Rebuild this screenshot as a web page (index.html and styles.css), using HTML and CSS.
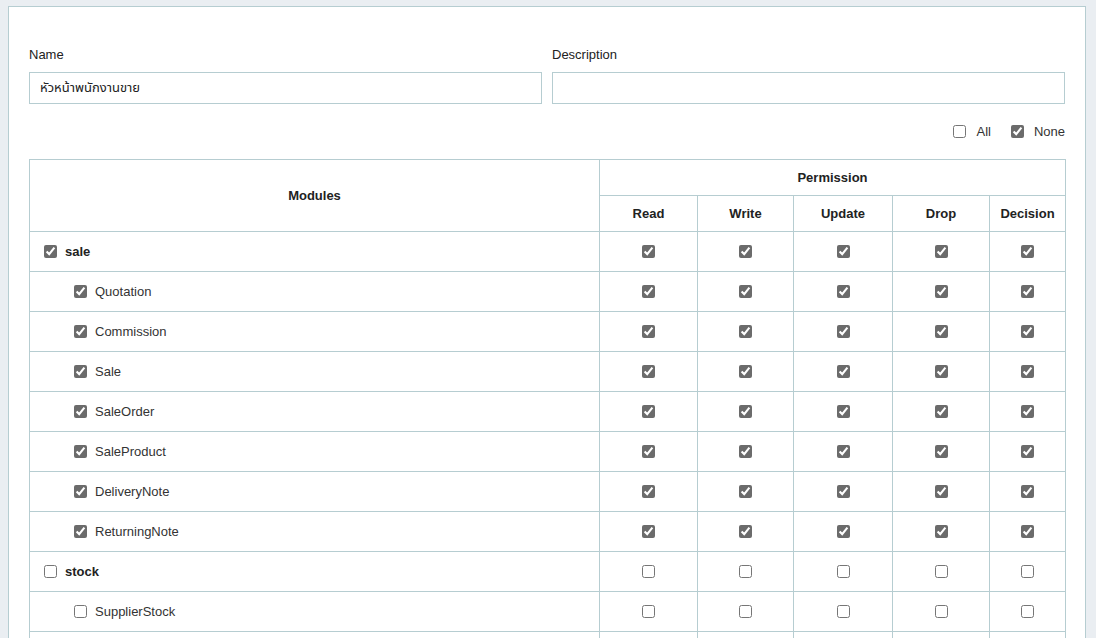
FILE: index.html
```html
<!DOCTYPE html>
<html>
<head>
<meta charset="utf-8">
<link rel="stylesheet" href="styles.css">
</head>
<body>
<div class="card">
  <div class="fields">
    <div class="field">
      <label class="label">Name</label>
      <input class="input" type="text" value="หัวหน้าพนักงานขาย">
    </div>
    <div class="field">
      <label class="label">Description</label>
      <input class="input" type="text" value="">
    </div>
  </div>
  <div class="toggles">
    <label class="toggle"><input type="checkbox" class="cb"> All</label>
    <label class="toggle"><input type="checkbox" class="cb" checked> None</label>
  </div>
  <table class="perm">
    <colgroup>
      <col class="c-mod"><col class="c-read"><col class="c-write"><col class="c-update"><col class="c-drop"><col class="c-dec">
    </colgroup>
    <thead>
      <tr class="h1">
        <th rowspan="2">Modules</th>
        <th colspan="5">Permission</th>
      </tr>
      <tr class="h2">
        <th>Read</th><th>Write</th><th>Update</th><th>Drop</th><th>Decision</th>
      </tr>
    </thead>
    <tbody>
      <tr class="parent"><td><label class="mod"><input type="checkbox" class="cb" checked>sale</label></td>
        <td><input type="checkbox" class="cb" checked></td><td><input type="checkbox" class="cb" checked></td><td><input type="checkbox" class="cb" checked></td><td><input type="checkbox" class="cb" checked></td><td><input type="checkbox" class="cb" checked></td></tr>
      <tr class="child"><td><label class="mod"><input type="checkbox" class="cb" checked>Quotation</label></td>
        <td><input type="checkbox" class="cb" checked></td><td><input type="checkbox" class="cb" checked></td><td><input type="checkbox" class="cb" checked></td><td><input type="checkbox" class="cb" checked></td><td><input type="checkbox" class="cb" checked></td></tr>
      <tr class="child"><td><label class="mod"><input type="checkbox" class="cb" checked>Commission</label></td>
        <td><input type="checkbox" class="cb" checked></td><td><input type="checkbox" class="cb" checked></td><td><input type="checkbox" class="cb" checked></td><td><input type="checkbox" class="cb" checked></td><td><input type="checkbox" class="cb" checked></td></tr>
      <tr class="child"><td><label class="mod"><input type="checkbox" class="cb" checked>Sale</label></td>
        <td><input type="checkbox" class="cb" checked></td><td><input type="checkbox" class="cb" checked></td><td><input type="checkbox" class="cb" checked></td><td><input type="checkbox" class="cb" checked></td><td><input type="checkbox" class="cb" checked></td></tr>
      <tr class="child"><td><label class="mod"><input type="checkbox" class="cb" checked>SaleOrder</label></td>
        <td><input type="checkbox" class="cb" checked></td><td><input type="checkbox" class="cb" checked></td><td><input type="checkbox" class="cb" checked></td><td><input type="checkbox" class="cb" checked></td><td><input type="checkbox" class="cb" checked></td></tr>
      <tr class="child"><td><label class="mod"><input type="checkbox" class="cb" checked>SaleProduct</label></td>
        <td><input type="checkbox" class="cb" checked></td><td><input type="checkbox" class="cb" checked></td><td><input type="checkbox" class="cb" checked></td><td><input type="checkbox" class="cb" checked></td><td><input type="checkbox" class="cb" checked></td></tr>
      <tr class="child"><td><label class="mod"><input type="checkbox" class="cb" checked>DeliveryNote</label></td>
        <td><input type="checkbox" class="cb" checked></td><td><input type="checkbox" class="cb" checked></td><td><input type="checkbox" class="cb" checked></td><td><input type="checkbox" class="cb" checked></td><td><input type="checkbox" class="cb" checked></td></tr>
      <tr class="child"><td><label class="mod"><input type="checkbox" class="cb" checked>ReturningNote</label></td>
        <td><input type="checkbox" class="cb" checked></td><td><input type="checkbox" class="cb" checked></td><td><input type="checkbox" class="cb" checked></td><td><input type="checkbox" class="cb" checked></td><td><input type="checkbox" class="cb" checked></td></tr>
      <tr class="parent"><td><label class="mod"><input type="checkbox" class="cb">stock</label></td>
        <td><input type="checkbox" class="cb"></td><td><input type="checkbox" class="cb"></td><td><input type="checkbox" class="cb"></td><td><input type="checkbox" class="cb"></td><td><input type="checkbox" class="cb"></td></tr>
      <tr class="child"><td><label class="mod"><input type="checkbox" class="cb">SupplierStock</label></td>
        <td><input type="checkbox" class="cb"></td><td><input type="checkbox" class="cb"></td><td><input type="checkbox" class="cb"></td><td><input type="checkbox" class="cb"></td><td><input type="checkbox" class="cb"></td></tr>
      <tr class="child spacer"><td></td><td></td><td></td><td></td><td></td><td></td></tr>
    </tbody>
  </table>
</div>
</body>
</html>
```
FILE: styles.css
```css
* { box-sizing: border-box; }
html, body { margin: 0; padding: 0; }
body {
  background: #eaeef2;
  font-family: "Liberation Sans", Arial, sans-serif;
  font-size: 13px;
  color: #222;
}
.card {
  margin: 6px 0 0 8px;
  width: 1078px;
  background: #fff;
  border: 1px solid #b6cdd1;
  border-bottom: none;
  padding: 40px 20px 20px 20px;
}
.fields {
  display: flex;
  gap: 10px;
}
.field {
  flex: 1;
  display: flex;
  flex-direction: column;
}
.label {
  font-size: 13px;
  line-height: 15px;
  color: #222;
  margin-bottom: 10px;
}
.input {
  height: 32px;
  border: 1px solid #b6cdd1;
  border-radius: 0;
  padding: 0 10px;
  font-family: "Liberation Sans", "Noto Sans Thai", sans-serif;
  font-size: 13px;
  color: #222;
  outline: none;
}
.toggles {
  display: flex;
  justify-content: flex-end;
  gap: 20px;
  height: 55px;
  align-items: center;
}
.toggle {
  display: flex;
  align-items: center;
  gap: 10px;
  color: #333;
}
.cb {
  margin: 0;
  width: 13px;
  height: 13px;
  accent-color: #6b6b6b;
}
.perm {
  width: 1036px;
  border-collapse: collapse;
  table-layout: fixed;
}
.c-mod { width: 570px; }
.c-read { width: 98px; }
.c-write { width: 96px; }
.c-update { width: 99px; }
.c-drop { width: 97px; }
.c-dec { width: 76px; }
.perm th, .perm td {
  border: 1px solid #b6cdd1;
  padding: 0;
  text-align: center;
  vertical-align: middle;
}
.perm th {
  font-weight: bold;
  font-size: 13px;
  color: #222;
}
.h1 th, .h2 th { height: 36px; }
.perm td { height: 40px; }
.perm td:first-child { text-align: left; }
.perm td > .cb { display: block; margin: 0 auto; }
.mod {
  display: flex;
  align-items: center;
  gap: 8px;
  color: #333;
}
.parent .mod { padding-left: 14px; font-weight: bold; color: #222; }
.child .mod { padding-left: 44px; }
```
